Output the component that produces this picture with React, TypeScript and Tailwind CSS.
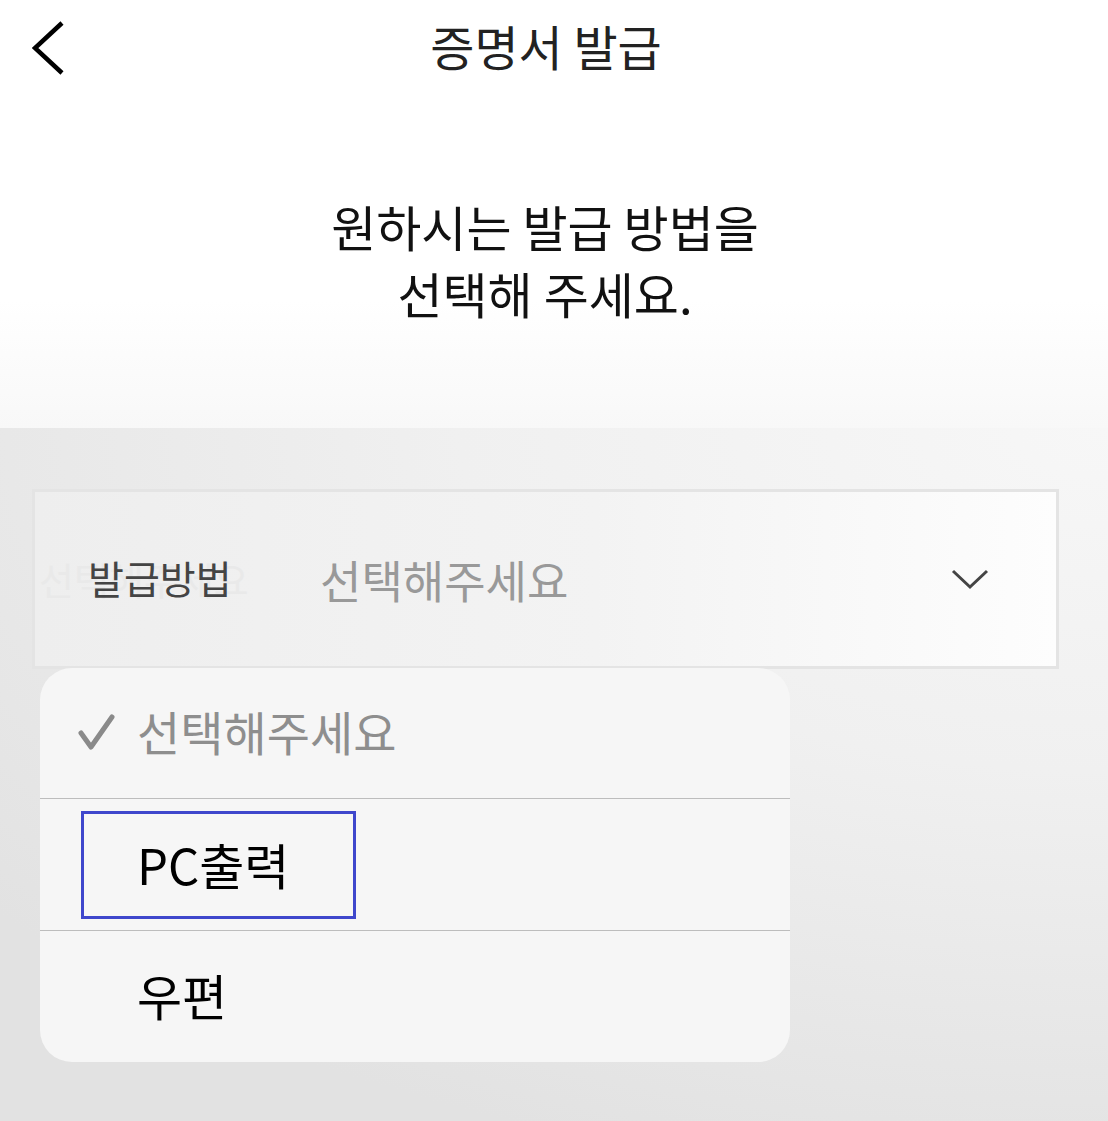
import React from "react";

const font = { fontFamily: '"Noto Sans CJK KR", "Noto Sans", sans-serif' };

export default function App() {
  return (
    <div
      className="w-[1108px] h-[1121px] flex flex-col overflow-hidden bg-white"
      style={font}
    >
      {/* top white section */}
      <div className="h-[428px] flex flex-col bg-[linear-gradient(to_bottom,#ffffff_0%,#ffffff_70%,#f8f8f8_100%)]">
        <div className="h-[95px] flex items-center pl-[32px] pr-[80px]">
          <svg width="32" height="54" viewBox="0 0 32 54" className="shrink-0">
            <path d="M30 2 L3 27 L30 52" fill="none" stroke="#000" strokeWidth="4.5" />
          </svg>
          <div className="flex-1 text-center text-[48px] leading-none text-[#222] mb-[6px]">
            증명서 발급
          </div>
        </div>
        <div className="mt-[97px] pr-[18px] text-center text-[49px] leading-[67px] text-[#111]">
          <div>원하시는 발급 방법을</div>
          <div>선택해 주세요.</div>
        </div>
      </div>

      {/* gray section */}
      <div className="flex-1 pt-[61px] pl-[32px] pr-[49px] bg-[radial-gradient(ellipse_130%_110%_at_100%_0%,#f7f7f7_0%,#f0f0f0_45%,#e2e2e2_100%)]">
        <div className="relative">
          <div className="relative h-[180px] border-[3px] border-[#e4e4e4] flex items-center bg-[linear-gradient(to_right,#eeeeee_0%,#f3f3f3_55%,#fdfdfd_100%)]">
            <span className="absolute left-[4px] top-1/2 -translate-y-1/2 text-[38px] text-[#e9e9e9] leading-none">
              선택해주세요
            </span>
            <span className="relative ml-[53px] w-[232px] text-[39px] text-[#444] leading-none mb-[4px]">
              발급방법
            </span>
            <span className="relative text-[45px] text-[#999] leading-none">
              선택해주세요
            </span>
            <svg
              width="40"
              height="26"
              viewBox="0 0 40 26"
              className="absolute right-[66px] top-1/2 -translate-y-1/2"
            >
              <path d="M3 5 L20 21 L37 5" fill="none" stroke="#444" strokeWidth="3" />
            </svg>
          </div>

          {/* dropdown popover */}
          <div className="absolute left-[8px] top-[179px] w-[750px] h-[394px] rounded-[32px] bg-[#f6f6f6] flex flex-col overflow-hidden">
            <div className="h-[131px] flex items-center border-b border-[#bdbdbd]">
              <svg width="40" height="40" viewBox="0 0 40 40" className="ml-[37px] mr-[20px] shrink-0">
                <path
                  d="M4 20 L14 34 L35 4"
                  fill="none"
                  stroke="#8a8a8a"
                  strokeWidth="5"
                  strokeLinecap="round"
                  strokeLinejoin="round"
                />
              </svg>
              <span className="text-[47px] text-[#8e8e8e] leading-none mb-[6px]">
                선택해주세요
              </span>
            </div>
            <div className="h-[132px] flex items-center border-b border-[#bdbdbd]">
              <div className="ml-[41px] w-[275px] h-[108px] border-[3px] border-[#3f47cc] flex items-center">
                <span className="ml-[53px] text-[49px] text-black leading-none mb-[2px]">
                  PC출력
                </span>
              </div>
            </div>
            <div className="flex-1 flex items-center">
              <span className="ml-[97px] text-[49px] text-black leading-none mb-[4px]">
                우편
              </span>
            </div>
          </div>
        </div>
      </div>
    </div>
  );
}
